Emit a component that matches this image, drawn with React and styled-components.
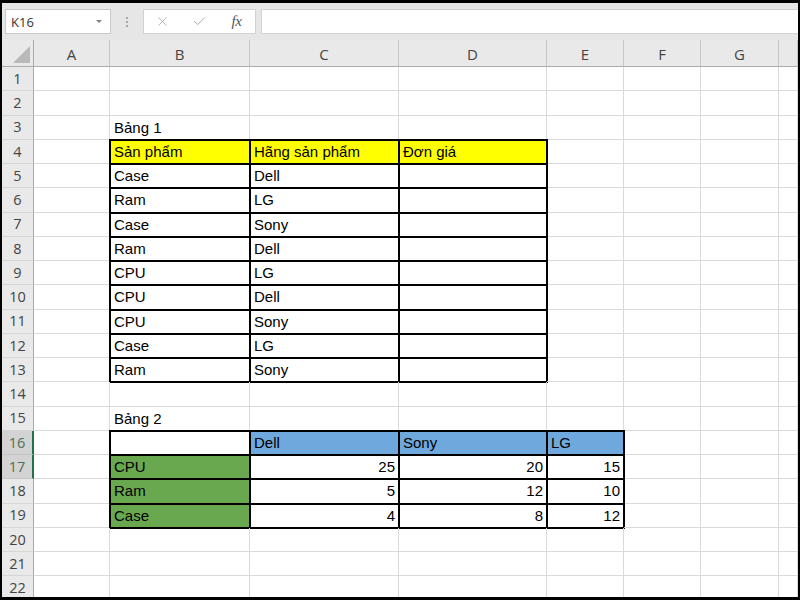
import React from "react";
import styled, { createGlobalStyle } from "styled-components";
import { X, Check } from "lucide-react";

const Global = createGlobalStyle`
  html, body { margin: 0; padding: 0; background: #000; }
  #root { width: 800px; height: 600px; }
`;

const Frame = styled.div`
  box-sizing: border-box;
  width: 800px;
  height: 600px;
  border-style: solid;
  border-color: #000;
  border-width: 3px 2px 3px 2px;
  background: #fff;
  display: flex;
  flex-direction: column;
  overflow: hidden;
`;

const Toolbar = styled.div`
  flex: 0 0 37px;
  display: flex;
  align-items: center;
  padding-left: 3px;
  background: #e6e6e6;
`;

const NameBox = styled.div`
  box-sizing: border-box;
  width: 106px;
  height: 25px;
  background: #fff;
  border: 1px solid #c9c9c9;
  display: flex;
  align-items: center;
  justify-content: space-between;
  padding: 0 8px 0 5px;
  font: 13px "Open Sans", sans-serif;
  color: #333;
`;

const Caret = styled.span`
  width: 0;
  height: 0;
  border-left: 3px solid transparent;
  border-right: 3px solid transparent;
  border-top: 3px solid #808080;
`;

const Grip = styled.div`
  width: 32px;
  display: flex;
  flex-direction: column;
  align-items: center;
  gap: 2px;
  & > span {
    width: 2px;
    height: 2px;
    background: #a8a8a8;
  }
`;

const FxButtons = styled.div`
  box-sizing: border-box;
  width: 113px;
  height: 25px;
  background: #fff;
  border: 1px solid #d2d2d2;
  display: grid;
  grid-template-columns: repeat(3, 1fr);
  align-items: center;
  justify-items: center;
  color: #ababab;
`;

const FxLabel = styled.span`
  font: italic 15px "Liberation Serif", serif;
  color: #555;
  letter-spacing: -0.5px;
`;

const FormulaInput = styled.div`
  flex: 1;
  height: 25px;
  box-sizing: border-box;
  margin-left: 5px;
  background: #fff;
  border: 1px solid #d2d2d2;
  border-right: none;
`;

const Sheet = styled.div`
  flex: 1;
  display: grid;
  grid-template-columns: 32px 76px 140px 149px 148px 77px 77px 78px 1fr;
  grid-template-rows: 27px repeat(22, 24.25px);
  overflow: hidden;
`;

const Corner = styled.div`
  box-sizing: border-box;
  background: #e9e9e9;
  border-right: 1px solid #ababab;
  border-bottom: 1px solid #ababab;
  display: flex;
  align-items: flex-end;
  justify-content: flex-end;
  padding: 0 3px 3px 0;
`;

const ColHead = styled.div`
  box-sizing: border-box;
  background: #e9e9e9;
  border-right: 1px solid #c6c6c6;
  border-bottom: 1px solid #ababab;
  display: flex;
  align-items: center;
  justify-content: center;
  padding-top: 3px;
  font: 15px/1 "Open Sans", sans-serif;
  color: #444;
`;

const RowHead = styled.div`
  box-sizing: border-box;
  background: ${(p) => (p.$active ? "#d3d3d3" : "#e9e9e9")};
  color: ${(p) => (p.$active ? "#4c7257" : "#444")};
  border-bottom: 1px solid ${(p) => (p.$active ? "#c4c4c4" : "#d6d6d6")};
  border-right: ${(p) => (p.$active ? "2px solid #217346" : "1px solid #ababab")};
  display: flex;
  align-items: center;
  justify-content: center;
  padding-top: 1px;
  font: 14.5px/1 "Open Sans", sans-serif;
`;

const Cell = styled.div`
  box-sizing: border-box;
  min-width: 0;
  border-right: 1px solid #dadada;
  border-bottom: 1px solid #dadada;
  background: ${(p) => p.$fill || "transparent"};
  outline: ${(p) => (p.$boxed ? "2px solid #000" : "none")};
  outline-offset: -1px;
  display: flex;
  align-items: center;
  justify-content: ${(p) => (p.$num ? "flex-end" : "flex-start")};
  padding: 0 3px 0 4px;
  font: 15px "Liberation Sans", Arial, sans-serif;
  color: #000;
  white-space: nowrap;
  overflow: hidden;
`;

const YELLOW = "#ffff00";
const BLUE = "#6fa8dc";
const GREEN = "#6aa84f";

const cols = ["A", "B", "C", "D", "E", "F", "G", ""];

const table1 = [
  ["Case", "Dell"],
  ["Ram", "LG"],
  ["Case", "Sony"],
  ["Ram", "Dell"],
  ["CPU", "LG"],
  ["CPU", "Dell"],
  ["CPU", "Sony"],
  ["Case", "LG"],
  ["Ram", "Sony"],
];

const table2 = [
  ["CPU", 25, 20, 15],
  ["Ram", 5, 12, 10],
  ["Case", 4, 8, 12],
];

const specs = {};
const put = (r, c, s) => (specs[`${r}-${c}`] = s);

put(3, 1, { t: "Bảng 1" });
["Sản phẩm", "Hãng sản phẩm", "Đơn giá"].forEach((t, i) =>
  put(4, 1 + i, { t, fill: YELLOW, boxed: true })
);
table1.forEach(([a, b], i) => {
  const r = 5 + i;
  put(r, 1, { t: a, boxed: true });
  put(r, 2, { t: b, boxed: true });
  put(r, 3, { t: "", boxed: true });
});
put(15, 1, { t: "Bảng 2" });
put(16, 1, { t: "", boxed: true });
["Dell", "Sony", "LG"].forEach((t, i) =>
  put(16, 2 + i, { t, fill: BLUE, boxed: true })
);
table2.forEach(([name, ...nums], i) => {
  const r = 17 + i;
  put(r, 1, { t: name, fill: GREEN, boxed: true });
  nums.forEach((n, j) => put(r, 2 + j, { t: n, num: true, boxed: true }));
});

const activeRows = new Set([16, 17]);

export default function App() {
  const rows = [];
  for (let r = 1; r <= 22; r++) {
    rows.push(
      <RowHead key={`h${r}`} $active={activeRows.has(r)}>
        {r}
      </RowHead>
    );
    for (let c = 0; c < cols.length; c++) {
      const s = specs[`${r}-${c}`] || {};
      rows.push(
        <Cell key={`${r}-${c}`} $fill={s.fill} $boxed={s.boxed} $num={s.num}>
          {s.t}
        </Cell>
      );
    }
  }

  return (
    <>
      <Global />
      <Frame>
        <Toolbar>
          <NameBox>
            K16
            <Caret />
          </NameBox>
          <Grip>
            <span />
            <span />
            <span />
          </Grip>
          <FxButtons>
            <X size={15} strokeWidth={1.4} />
            <Check size={15} strokeWidth={1.6} />
            <FxLabel>fx</FxLabel>
          </FxButtons>
          <FormulaInput />
        </Toolbar>
        <Sheet>
          <Corner>
            <svg width="17" height="17" viewBox="0 0 17 17">
              <polygon points="17,0 17,17 0,17" fill="#b9b9b9" />
            </svg>
          </Corner>
          {cols.map((c, i) => (
            <ColHead key={`c${i}`}>{c}</ColHead>
          ))}
          {rows}
        </Sheet>
      </Frame>
    </>
  );
}
